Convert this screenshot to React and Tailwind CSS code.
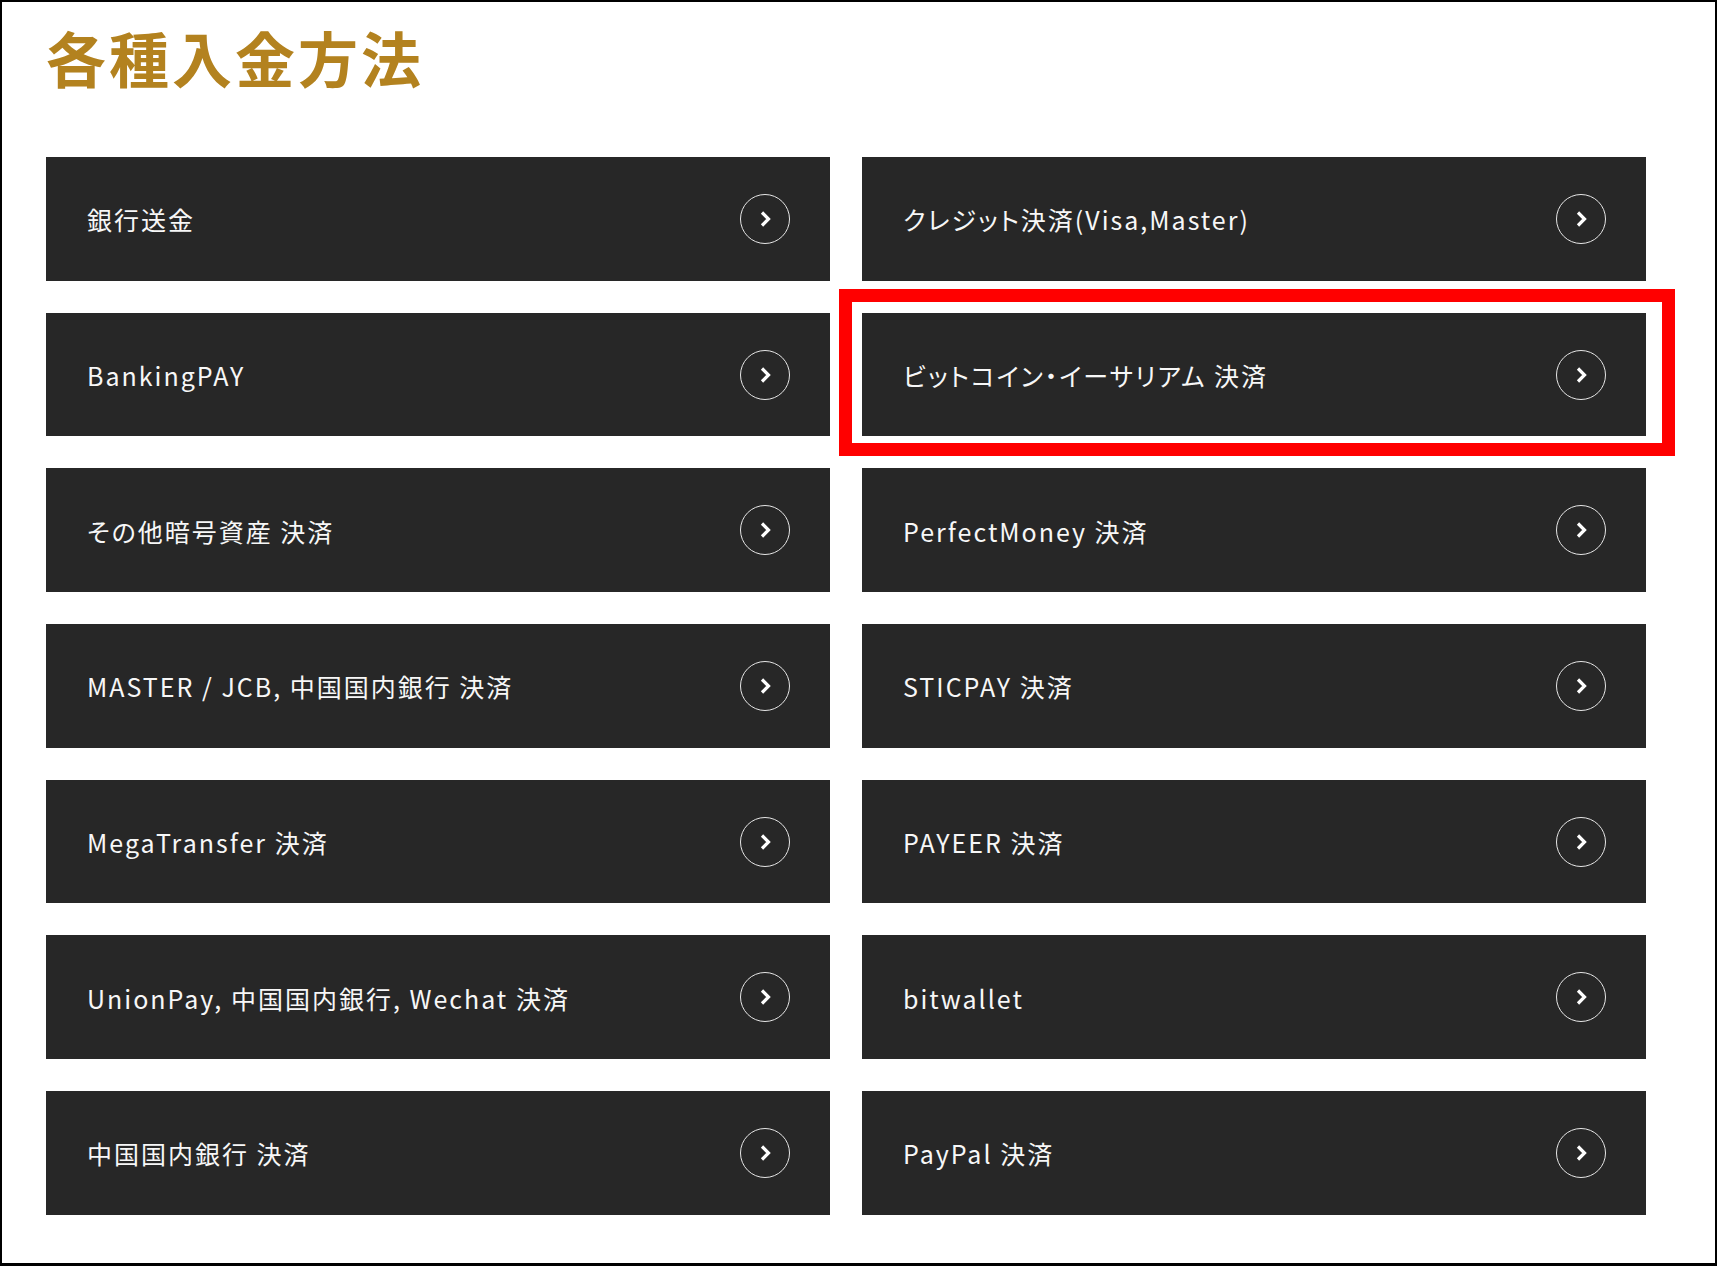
import React from 'react'

const methods = [
  '銀行送金',
  'クレジット決済(Visa,Master)',
  'BankingPAY',
  'ビットコイン・イーサリアム 決済',
  'その他暗号資産 決済',
  'PerfectMoney 決済',
  'MASTER / JCB, 中国国内銀行 決済',
  'STICPAY 決済',
  'MegaTransfer 決済',
  'PAYEER 決済',
  'UnionPay, 中国国内銀行, Wechat 決済',
  'bitwallet',
  '中国国内銀行 決済',
  'PayPal 決済'
]

const ArrowCircle = () => (
  <span className="flex h-[50px] w-[50px] shrink-0 items-center justify-center rounded-full border-[1.5px] border-[#e6e6e6]">
    <svg width="16" height="18" viewBox="0 0 16 18" fill="none">
      <path d="M5 2.5 L11.5 9 L5 15.5" stroke="#ffffff" strokeWidth="3.2" strokeLinecap="butt" strokeLinejoin="miter" />
    </svg>
  </span>
)

const App = () => {
  return (
    <div className="h-[1266px] w-full overflow-hidden border-t-2 border-l-2 border-r-2 border-b-[3px] border-black bg-white pl-[44px] font-['Noto_Sans_CJK_JP',sans-serif]">
      {/* Heading */}
      <h1 className="mt-[25px] text-[60px] font-bold leading-none tracking-[3px] text-[#b3821f]">
        各種入金方法
      </h1>

      {/* Method grid */}
      <div className="mt-[70px] grid w-[1600px] grid-cols-2 gap-x-[32px] gap-y-[32px]">
        {methods.map((label, i) => (
          <div
            key={label + i}
            className="relative flex h-[123.7px] cursor-pointer items-center justify-between bg-[#272727] pl-[41px] pr-[40px]"
          >
            <span className="pt-[2px] text-[25px] leading-none tracking-[0.08em] text-[#f7f7f7] [font-feature-settings:'palt']">
              {label}
            </span>
            <ArrowCircle />
            {i === 3 && (
              <div className="pointer-events-none absolute -top-[24px] -right-[29px] -bottom-[20px] -left-[23px] border-[13px] border-[#ff0000]"></div>
            )}
          </div>
        ))}
      </div>
    </div>
  )
}

export default App
